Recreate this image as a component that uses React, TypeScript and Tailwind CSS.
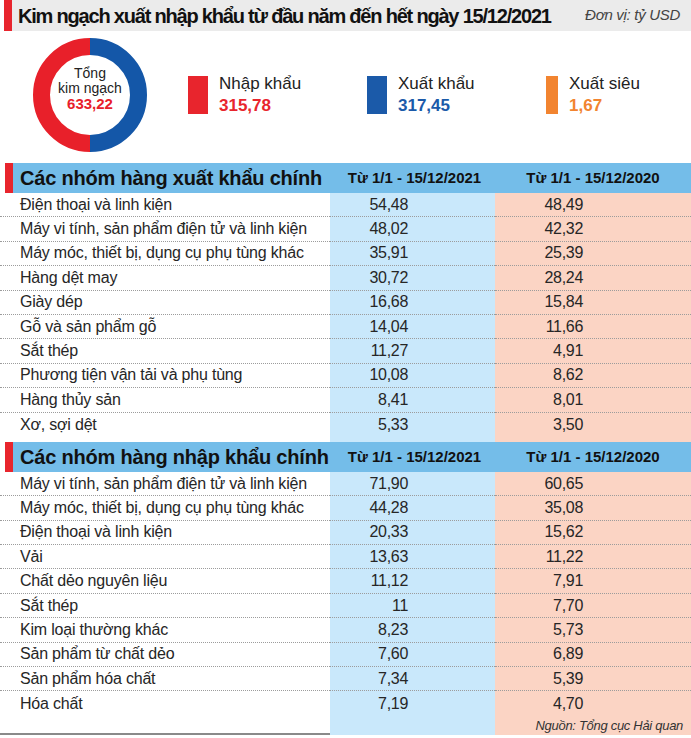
const exportRows: [string, string, string][] = [
  ["Điện thoại và linh kiện", "54,48", "48,49"],
  ["Máy vi tính, sản phẩm điện tử và linh kiện", "48,02", "42,32"],
  ["Máy móc, thiết bị, dụng cụ phụ tùng khác", "35,91", "25,39"],
  ["Hàng dệt may", "30,72", "28,24"],
  ["Giày dép", "16,68", "15,84"],
  ["Gỗ và sản phẩm gỗ", "14,04", "11,66"],
  ["Sắt thép", "11,27", "4,91"],
  ["Phương tiện vận tải và phụ tùng", "10,08", "8,62"],
  ["Hàng thủy sản", "8,41", "8,01"],
  ["Xơ, sợi dệt", "5,33", "3,50"],
];

const importRows: [string, string, string][] = [
  ["Máy vi tính, sản phẩm điện tử và linh kiện", "71,90", "60,65"],
  ["Máy móc, thiết bị, dụng cụ phụ tùng khác", "44,28", "35,08"],
  ["Điện thoại và linh kiện", "20,33", "15,62"],
  ["Vải", "13,63", "11,22"],
  ["Chất dẻo nguyên liệu", "11,12", "7,91"],
  ["Sắt thép", "11", "7,70"],
  ["Kim loại thường khác", "8,23", "5,73"],
  ["Sản phẩm từ chất dẻo", "7,60", "6,89"],
  ["Sản phẩm hóa chất", "7,34", "5,39"],
  ["Hóa chất", "7,19", "4,70"],
];

function Donut() {
  return (
    <div className="relative h-[114px] w-[114px] shrink-0">
      <svg width="114" height="114" viewBox="0 0 114 114">
        <path d="M57 8.5 A48.5 48.5 0 0 0 57 105.5" fill="none" stroke="#e8202a" strokeWidth="17" />
        <path d="M57 8.5 A48.5 48.5 0 0 1 57 105.5" fill="none" stroke="#1457a8" strokeWidth="17" />
      </svg>
      <div className="absolute inset-0 flex flex-col items-center justify-center pb-[13px] text-center">
        <div className="text-[14px] leading-[15px] text-[#222]">Tổng</div>
        <div className="text-[14px] leading-[15px] text-[#222]">kim ngạch</div>
        <div className="text-[15px] font-bold leading-[15px] text-[#e8202a]">633,22</div>
      </div>
    </div>
  );
}

function Legend({ label, value, bar, color }: { label: string; value: string; bar: string; color: string }) {
  return (
    <div className="flex w-[179px] items-center">
      <div className={`h-[38px] ${bar}`} />
      <div className="ml-[11px] flex flex-col">
        <span className="text-[17px] leading-[22px] text-[#222]">{label}</span>
        <span className={`text-[17px] font-bold leading-[22px] ${color}`}>{value}</span>
      </div>
    </div>
  );
}

function SectionHead({ title }: { title: string }) {
  return (
    <div className="ml-[5px] grid h-[30px] grid-cols-[325px_165px_196px] items-center bg-[#74bde9]">
      <div className="flex h-full items-center">
        <div className="h-full w-2 bg-[#e8252d]" />
        <span className="ml-[7px] text-[20px] font-bold tracking-[-0.2px] text-[#111]">{title}</span>
      </div>
      <div className="pl-[4px] text-center text-[15px] font-bold text-[#111]">Từ 1/1 - 15/12/2021</div>
      <div className="text-center text-[15px] font-bold text-[#111]">Từ 1/1 - 15/12/2020</div>
    </div>
  );
}

function Rows({ rows }: { rows: [string, string, string][] }) {
  return (
    <div className="grid grid-cols-[330px_165px_196px]">
      {rows.map(([name, a, b], i) => {
        const line = i < rows.length - 1 ? "border-b border-dotted border-[#9c9c9c]" : "";
        return (
          <div key={name} className="contents">
            <div className={`flex h-[24.4px] items-center pl-5 text-[16px] tracking-[-0.2px] text-[#262626] ${line}`}>{name}</div>
            <div className={`flex h-[24.4px] items-center justify-end bg-[#c9e8fb] pr-[87px] text-[16px] tracking-[-0.3px] text-[#262626] ${line}`}>{a}</div>
            <div className={`flex h-[24.4px] items-center justify-end bg-[#fbd4c4] pr-[108px] text-[16px] tracking-[-0.3px] text-[#262626] ${line}`}>{b}</div>
          </div>
        );
      })}
    </div>
  );
}

export default function App() {
  return (
    <div className="h-[738px] w-[691px] overflow-hidden bg-white font-['Liberation_Sans',Arial,sans-serif]">
      {/* tiêu đề */}
      <div className="ml-1 flex h-[31px] items-center bg-[#ebebeb]">
        <div className="h-full w-2 bg-[#e8252d]" />
        <h1 className="ml-[6px] text-[20px] font-bold tracking-[-1.2px] text-[#111]">
          Kim ngạch xuất nhập khẩu từ đầu năm đến hết ngày 15/12/2021
        </h1>
        <span className="ml-auto mr-[11px] text-[15px] italic tracking-[-0.3px] text-[#444]">Đơn vị: tỷ USD</span>
      </div>

      {/* tổng kim ngạch */}
      <div className="flex h-[128px] items-center pl-[33px]">
        <Donut />
        <div className="ml-[41px] flex">
          <Legend label="Nhập khẩu" value="315,78" bar="w-5 bg-[#e8252d]" color="text-[#e8252d]" />
          <Legend label="Xuất khẩu" value="317,45" bar="w-5 bg-[#1b5aa9]" color="text-[#1b5aa9]" />
          <Legend label="Xuất siêu" value="1,67" bar="w-[12px] bg-[#f28430]" color="text-[#f28430]" />
        </div>
      </div>

      <div className="mt-1">
        <SectionHead title="Các nhóm hàng xuất khẩu chính" />
        <Rows rows={exportRows} />
        <div className="grid h-[5px] grid-cols-[330px_165px_196px]">
          <div />
          <div className="bg-[#c9e8fb]" />
          <div className="bg-[#fbd4c4]" />
        </div>
        <SectionHead title="Các nhóm hàng nhập khẩu chính" />
        <Rows rows={importRows} />
        <div className="grid h-[19px] grid-cols-[330px_165px_196px] border-b-2 border-[#8a8a8a]">
          <div />
          <div className="bg-[#c9e8fb]" />
          <div className="flex items-center justify-end bg-[#fbd4c4] pr-2 text-[13px] italic tracking-[-0.3px] text-[#333]">
            Nguồn: Tổng cục Hải quan
          </div>
        </div>
      </div>
    </div>
  );
}
